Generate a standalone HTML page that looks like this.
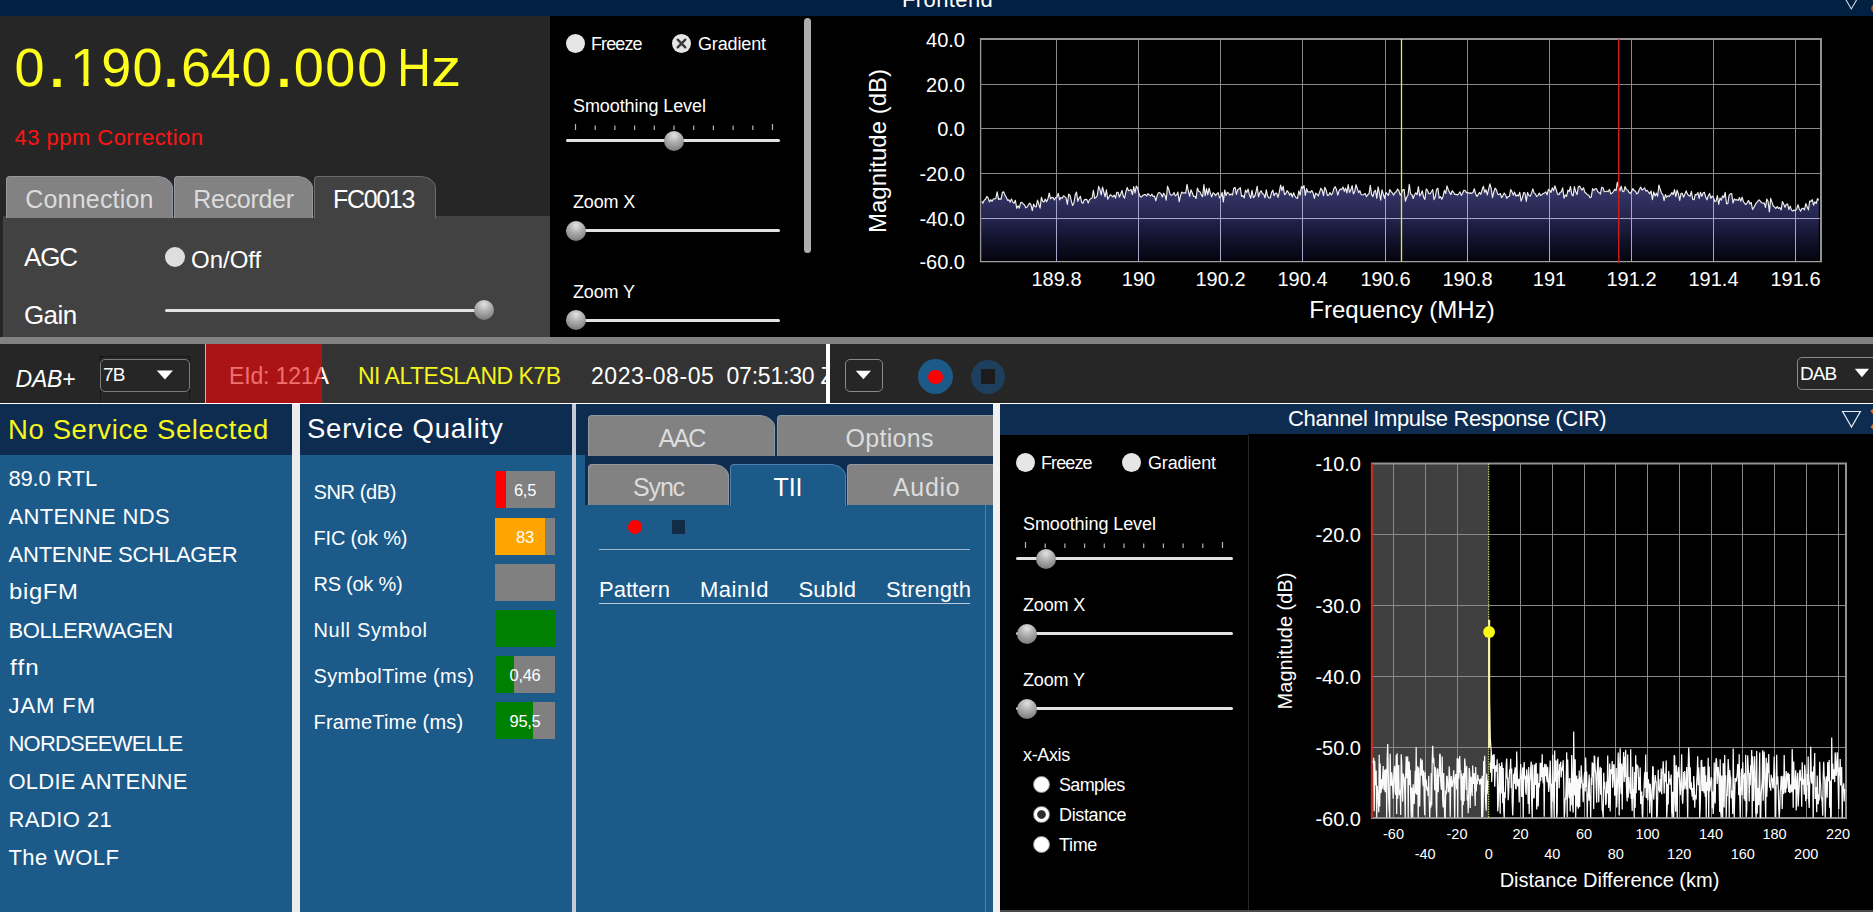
<!DOCTYPE html>
<html><head><meta charset="utf-8"><title>DAB</title>
<style>
html,body{margin:0;padding:0;background:#000;}
body{width:1873px;height:912px;overflow:hidden;position:relative;font-family:"Liberation Sans",sans-serif;color:#fff;}
.a{position:absolute;white-space:nowrap;}
.t{position:absolute;white-space:nowrap;line-height:1;}
.fd{position:absolute;top:37.3px;width:40px;text-align:center;font-size:54px;line-height:60px;color:#ffff1e;}
.tab{position:absolute;box-sizing:border-box;background:#828282;border:1px solid #93999f;border-bottom:none;border-radius:4px 16px 0 0 / 4px 12.5px 0 0;text-align:center;color:#dcdcdc;}
.trk{position:absolute;height:3px;background:#e2e2e2;border-radius:2px;}
.thumb{position:absolute;width:20px;height:20px;border-radius:50%;background:radial-gradient(circle at 50% 22%,#e2e2e2 0%,#b0b0b0 38%,#6a6a6a 100%);}
.rad{position:absolute;width:19px;height:19px;border-radius:50%;background:#e6e6e6;}
.lb{position:absolute;white-space:nowrap;font-size:18px;line-height:20px;color:#fff;}
.li{position:absolute;left:8.5px;white-space:nowrap;font-size:22px;line-height:26px;color:#fff;letter-spacing:-0.3px;}
.ql{position:absolute;left:313.5px;white-space:nowrap;font-size:20px;line-height:24px;color:#fff;}
.bar{position:absolute;left:495px;width:60px;height:37px;background:#808080;overflow:hidden;}
.bar i{position:absolute;left:0;top:0;bottom:0;display:block;}
.bar span{position:absolute;left:0;right:0;top:0;line-height:39px;text-align:center;font-size:16.5px;color:#fff;letter-spacing:-0.3px;}
.rb{position:absolute;width:17px;height:17px;border-radius:50%;background:#fff;border:1px solid #8c8c8c;box-sizing:border-box;}
svg text{font-family:"Liberation Sans",sans-serif;fill:#fff;}
</style></head>
<body>
<!-- top title bar -->
<div class="a" style="left:0;top:0;width:1873px;height:16px;background:#022042;overflow:hidden;">
  <div class="t" style="left:902px;top:-10.6px;font-size:22px;letter-spacing:0.4px;">Frontend</div>
  <svg class="a" style="left:1838px;top:0" width="35" height="16"><path d="M4.3,-6.5 L13.3,9 L22.3,-6.5" fill="none" stroke="#d0daea" stroke-width="1.1"/><circle cx="36.6" cy="8.5" r="3.4" fill="#a45a30"/></svg>
</div>

<!-- top-left panel -->
<div class="a" style="left:0;top:16px;width:550px;height:321px;background:#262626;"></div>
<div class="fd" style="left:9.5px;">0</div>
<div class="fd" style="left:37px;transform:scale(1.4);transform-origin:50% 78.3%;">.</div>
<div class="fd" style="left:65px;clip-path:polygon(0 0,40px 0,40px 42.6px,23.6px 42.6px,23.6px 60px,18.4px 60px,18.4px 42.6px,0 42.6px);">1</div>
<div class="fd" style="left:96.2px;">9</div>
<div class="fd" style="left:127.5px;">0</div>
<div class="fd" style="left:151px;transform:scale(1.4);transform-origin:50% 78.3%;">.</div>
<div class="fd" style="left:176px;">6</div>
<div class="fd" style="left:205.6px;">4</div>
<div class="fd" style="left:236.6px;">0</div>
<div class="fd" style="left:263.5px;transform:scale(1.4);transform-origin:50% 78.3%;">.</div>
<div class="fd" style="left:288.7px;">0</div>
<div class="fd" style="left:320.2px;">0</div>
<div class="fd" style="left:352.2px;">0</div>
<div class="fd" style="left:393.7px;transform:scaleX(0.86);">H</div>
<div class="fd" style="left:425.8px;transform:scaleX(1.12);">z</div>

<div class="t" style="left:14.5px;top:126px;font-size:22px;line-height:24px;color:#ff1414;letter-spacing:0.47px;">43 ppm Correction</div>

<!-- tab strip -->
<div class="a" style="left:3px;top:216px;width:547px;height:121px;background:#424242;"></div>
<div class="tab" style="left:6px;top:176px;width:167px;height:42px;font-size:25px;line-height:44px;letter-spacing:0.2px;">Connection</div>
<div class="tab" style="left:174px;top:176px;width:139px;height:42px;font-size:25px;line-height:44px;letter-spacing:-0.3px;">Recorder</div>
<div class="tab" style="left:314px;top:176px;width:122px;height:42px;font-size:25px;line-height:44px;background:#424242;color:#fff;border-color:#6c6c6c;letter-spacing:-1.3px;text-indent:-3px;">FC0013</div>
<div class="t" style="left:24px;top:243px;font-size:26px;line-height:28px;letter-spacing:-1.2px;">AGC</div>
<div class="rad" style="left:165px;top:247px;width:20px;height:20px;background:#dedede;"></div>
<div class="t" style="left:191px;top:246px;font-size:24px;line-height:28px;">On/Off</div>
<div class="t" style="left:24px;top:301px;font-size:26px;line-height:28px;letter-spacing:-0.6px;">Gain</div>
<div class="trk" style="left:165px;top:309px;width:320px;"></div>
<div class="thumb" style="left:474px;top:300px;"></div>

<!-- splitter -->
<div class="a" style="left:0;top:337px;width:1873px;height:7px;background:#828282;"></div>

<!-- spectrum controls -->
<div class="a" style="left:804px;top:17.5px;width:7px;height:235.5px;background:#aeacac;border-radius:4px;"></div>
<div class="rad" style="left:566px;top:33.5px;"></div>
<div class="lb" style="left:591px;top:34.1px;letter-spacing:-0.9px;">Freeze</div>
<div class="rad" style="left:672px;top:33.5px;"></div>
<svg class="a" style="left:672px;top:33.5px" width="19" height="19"><path d="M5.7,5.7 L13.3,13.3 M13.3,5.7 L5.7,13.3" stroke="#3a3a3a" stroke-width="2.4" stroke-linecap="round"/></svg>
<div class="lb" style="left:698px;top:34.1px;letter-spacing:-0.15px;">Gradient</div>
<div class="lb" style="left:573px;top:96.1px;letter-spacing:-0.08px;">Smoothing Level</div>
<svg class="a" style="left:560px;top:120px" width="230" height="14"><g stroke="#b4b4b4" stroke-width="1.2">
<line x1="15.5" y1="4" x2="15.5" y2="10"/><line x1="35.2" y1="5.6" x2="35.2" y2="10"/><line x1="54.9" y1="5.6" x2="54.9" y2="10"/><line x1="74.6" y1="5.6" x2="74.6" y2="10"/><line x1="94.3" y1="5.6" x2="94.3" y2="10"/><line x1="114" y1="5.6" x2="114" y2="10"/><line x1="133.7" y1="5.6" x2="133.7" y2="10"/><line x1="153.4" y1="5.6" x2="153.4" y2="10"/><line x1="173.1" y1="5.6" x2="173.1" y2="10"/><line x1="192.8" y1="5.6" x2="192.8" y2="10"/><line x1="212.5" y1="4" x2="212.5" y2="10"/></g></svg>
<div class="trk" style="left:566px;top:139px;width:214px;"></div>
<div class="thumb" style="left:664px;top:130.5px;"></div>
<div class="lb" style="left:573px;top:192.1px;letter-spacing:-0.15px;">Zoom X</div>
<div class="trk" style="left:566px;top:229px;width:214px;"></div>
<div class="thumb" style="left:566px;top:220.5px;"></div>
<div class="lb" style="left:573px;top:282.1px;letter-spacing:-0.15px;">Zoom Y</div>
<div class="trk" style="left:566px;top:319px;width:214px;"></div>
<div class="thumb" style="left:566px;top:310px;"></div>

<!-- middle row -->
<div class="a" style="left:0;top:344px;width:1873px;height:59px;background:#262626;"></div>
<div class="a" style="left:322px;top:344px;width:504px;height:59px;background:#333333;"></div>
<div class="t" style="left:15.6px;top:366px;font-size:23px;line-height:26px;font-style:italic;letter-spacing:-0.3px;">DAB+</div>
<div class="a" style="left:100px;top:356px;width:90px;height:48px;box-sizing:border-box;border:1px dotted #0a0a0a;border-bottom:none;"></div>
<div class="a" style="left:100px;top:359px;width:90px;height:33px;box-sizing:border-box;border:1px solid #7c7c7c;border-radius:5px;"></div>
<div class="t" style="left:103px;top:365px;font-size:19px;line-height:20px;letter-spacing:-0.8px;">7B</div>
<svg class="a" style="left:156px;top:370px" width="18" height="10"><path d="M0.8,0.6 L17,0.6 L8.9,9.4 Z" fill="#fff"/></svg>
<div class="a" style="left:205px;top:344px;width:117px;height:59px;background:#aa1414;border-left:1px solid #d8b0b0;box-sizing:border-box;"></div>
<div class="t" style="left:229px;top:363px;font-size:23px;line-height:26px;color:#f07070;letter-spacing:-0.15px;">EId: 121A</div>
<div class="a" style="left:322px;top:344px;width:20px;height:59px;overflow:hidden;"><div class="t" style="left:-93px;top:19px;font-size:23px;line-height:26px;color:#fff;letter-spacing:-0.15px;">EId: 121A</div></div>
<div class="t" style="left:358px;top:363px;font-size:23px;line-height:26px;color:#f4f420;letter-spacing:-0.5px;">NI ALTESLAND K7B</div>
<div class="a" style="left:560px;top:344px;width:266px;height:59px;overflow:hidden;"><div class="t" style="left:31px;top:19px;font-size:23px;line-height:26px;color:#fff;letter-spacing:0.57px;">2023-08-05</div><div class="t" style="left:166.5px;top:19px;font-size:23px;line-height:26px;color:#fff;letter-spacing:-0.2px;white-space:pre;">07:51:30 Z</div></div>
<div class="a" style="left:826px;top:344px;width:4px;height:59px;background:#fff;"></div>
<div class="a" style="left:845px;top:359px;width:38px;height:33px;box-sizing:border-box;border:1px solid #8a8a8a;border-radius:5px;"></div>
<svg class="a" style="left:855px;top:370px" width="18" height="10"><path d="M0.8,0.8 L16,0.8 L8.4,9.2 Z" fill="#fff"/></svg>
<div class="a" style="left:918px;top:359px;width:35px;height:35px;border-radius:50%;background:#1c5a8a;"></div>
<div class="a" style="left:928px;top:369.5px;width:14.5px;height:14.5px;border-radius:50%;background:#ff0000;"></div>
<div class="a" style="left:971px;top:360px;width:34px;height:34px;border-radius:50%;background:#1e3f5e;"></div>
<div class="a" style="left:981px;top:369px;width:14px;height:15px;background:#1c1c1c;"></div>
<div class="a" style="left:1797px;top:357px;width:90px;height:33px;box-sizing:border-box;border:1px solid #8a8a8a;border-radius:5px;"></div>
<div class="t" style="left:1800px;top:364px;font-size:19px;line-height:20px;letter-spacing:-1px;">DAB</div>
<svg class="a" style="left:1854px;top:368px" width="16" height="10"><path d="M0.8,0.8 L15,0.8 L7.9,9.2 Z" fill="#fff"/></svg>
<div class="a" style="left:0;top:402.5px;width:1873px;height:1.5px;background:#fff;"></div>

<!-- bottom: service list -->
<div class="a" style="left:0;top:404px;width:292px;height:508px;background:#1c5a8a;"></div>
<div class="a" style="left:0;top:404px;width:292px;height:51px;background:#0e2c50;"></div>
<div class="t" style="left:8px;top:413.5px;font-size:27.5px;line-height:32px;color:#f6f620;letter-spacing:0.62px;">No Service Selected</div>
<div class="li" style="top:465.5px;letter-spacing:-0.21px;">89.0 RTL</div>
<div class="li" style="top:503.5px;letter-spacing:0.34px;">ANTENNE NDS</div>
<div class="li" style="top:541.5px;letter-spacing:-0.21px;">ANTENNE SCHLAGER</div>
<div class="li" style="top:579.4px;letter-spacing:0.6px;transform:scaleX(1.085);transform-origin:0 0;">bigFM</div>
<div class="li" style="top:617.6px;letter-spacing:-0.42px;">BOLLERWAGEN</div>
<div class="li" style="top:654.75px;letter-spacing:1px;transform:scaleX(1.1);transform-origin:0 0;left:9.5px;">ffn</div>
<div class="li" style="top:692.75px;letter-spacing:0.94px;">JAM FM</div>
<div class="li" style="top:731px;letter-spacing:-0.80px;">NORDSEEWELLE</div>
<div class="li" style="top:769px;letter-spacing:0.23px;">OLDIE ANTENNE</div>
<div class="li" style="top:807px;letter-spacing:0.44px;">RADIO 21</div>
<div class="li" style="top:844.75px;letter-spacing:0.40px;">The WOLF</div>
<div class="a" style="left:292px;top:404px;width:8px;height:508px;background:#ececec;"></div>

<!-- service quality -->
<div class="a" style="left:300px;top:404px;width:272px;height:508px;background:#1c5a8a;"></div>
<div class="a" style="left:300px;top:404px;width:272px;height:51px;background:#0e2c50;"></div>
<div class="t" style="left:307px;top:413px;font-size:27.5px;line-height:32px;color:#fff;letter-spacing:0.77px;">Service Quality</div>
<div class="ql" style="top:479.8px;letter-spacing:-0.39px;">SNR (dB)</div>
<div class="ql" style="top:525.8px;letter-spacing:-0.17px;">FIC (ok %)</div>
<div class="ql" style="top:571.8px;letter-spacing:-0.25px;">RS (ok %)</div>
<div class="ql" style="top:617.8px;letter-spacing:0.68px;">Null Symbol</div>
<div class="ql" style="top:663.8px;letter-spacing:0.32px;">SymbolTime (ms)</div>
<div class="ql" style="top:709.8px;letter-spacing:0.20px;">FrameTime (ms)</div>
<div class="bar" style="top:471px;"><i style="width:11px;background:#ff0000"></i><span>6,5</span></div>
<div class="bar" style="top:518px;"><i style="width:50px;background:#ffa500"></i><span>83</span></div>
<div class="bar" style="top:564px;"></div>
<div class="bar" style="top:610px;"><i style="width:60px;background:#008000"></i></div>
<div class="bar" style="top:656px;"><i style="width:19px;background:#008000"></i><span>0,46</span></div>
<div class="bar" style="top:702px;"><i style="width:38px;background:#008000"></i><span>95,5</span></div>
<div class="a" style="left:572px;top:404px;width:4.5px;height:508px;background:#c4cbd6;"></div>

<!-- tab panel -->
<div class="a" style="left:576px;top:404px;width:417px;height:508px;background:#1c5a8a;overflow:hidden;">
  <div class="a" style="left:0;top:0;width:417px;height:51px;background:#0e2c50;"></div>
  <div class="a" style="left:9px;top:0;width:408px;height:101px;background:#0e2c50;"></div>
  <div class="tab" style="left:12px;top:11px;width:187px;height:41px;font-size:25px;line-height:44px;letter-spacing:-1.8px;">AAC</div>
  <div class="tab" style="left:201px;top:11px;width:230px;height:41px;font-size:25px;line-height:44px;text-align:left;padding-left:67.5px;letter-spacing:0.3px;">Options</div>
  <div class="tab" style="left:12px;top:60px;width:141px;height:41px;font-size:25px;line-height:44px;letter-spacing:-1.2px;">Sync</div>
  <div class="tab" style="left:154px;top:60px;width:116px;height:42px;font-size:25px;line-height:44px;background:#1c5a8a;color:#fff;border-color:#4f82ab;">TII</div>
  <div class="tab" style="left:271px;top:60px;width:160px;height:41px;font-size:25px;line-height:44px;text-align:left;padding-left:45px;letter-spacing:0.7px;">Audio</div>
  <div class="a" style="left:409px;top:101px;width:1px;height:420px;background:#4f82ab;"></div>
  <div class="a" style="left:52.4px;top:116.2px;width:13.5px;height:13.5px;border-radius:50%;background:#ff0000;"></div>
  <div class="a" style="left:96px;top:116px;width:13px;height:14px;background:#122c48;"></div>
  <div class="a" style="left:23px;top:145px;width:371px;height:1px;background:#9db6cc;"></div>
  <div class="t" style="left:23px;top:173px;font-size:22px;line-height:26px;letter-spacing:0px;">Pattern</div>
  <div class="t" style="left:124px;top:173px;font-size:22px;line-height:26px;letter-spacing:0.5px;">MainId</div>
  <div class="t" style="left:222.5px;top:173px;font-size:22px;line-height:26px;letter-spacing:0px;">SubId</div>
  <div class="t" style="left:310px;top:173px;font-size:22px;line-height:26px;letter-spacing:0.25px;">Strength</div>
  <div class="a" style="left:23px;top:199px;width:371px;height:1px;background:#b8c8d8;"></div>
</div>
<div class="a" style="left:993px;top:404px;width:7px;height:508px;background:#f0f0f0;"></div>

<!-- CIR panel -->
<div class="a" style="left:1000px;top:404px;width:873px;height:30px;background:#0e2c50;overflow:hidden;">
  <div class="t" style="left:288px;top:3px;font-size:22px;line-height:24px;letter-spacing:-0.36px;">Channel Impulse Response (CIR)</div>
  <svg class="a" style="left:838px;top:0" width="35" height="30"><path d="M4.6,7.5 L22.4,7.5 L13.5,23 Z" fill="none" stroke="#e8eef8" stroke-width="1.2"/><path d="M33.5,6 L41.5,15 L33.5,24" stroke="#e06a1a" stroke-width="3" fill="none"/></svg>
</div>
<div class="a" style="left:1000px;top:434px;width:248px;height:1px;background:#0e2c50;"></div><div class="a" style="left:1000px;top:435px;width:248px;height:477px;background:#000;border-right:1px solid #262626;"></div>
<div class="a" style="left:1000px;top:910px;width:873px;height:2px;background:#4a4a4a;"></div>
<div class="rad" style="left:1016px;top:452.5px;"></div>
<div class="lb" style="left:1041px;top:453.1px;letter-spacing:-0.9px;">Freeze</div>
<div class="rad" style="left:1122px;top:452.5px;"></div>
<div class="lb" style="left:1148px;top:453.1px;letter-spacing:-0.15px;">Gradient</div>
<div class="lb" style="left:1023px;top:514.1px;letter-spacing:-0.08px;">Smoothing Level</div>
<svg class="a" style="left:1010px;top:538px" width="230" height="14"><g stroke="#b4b4b4" stroke-width="1.2">
<line x1="15.5" y1="4" x2="15.5" y2="10"/><line x1="35.2" y1="5.6" x2="35.2" y2="10"/><line x1="54.9" y1="5.6" x2="54.9" y2="10"/><line x1="74.6" y1="5.6" x2="74.6" y2="10"/><line x1="94.3" y1="5.6" x2="94.3" y2="10"/><line x1="114" y1="5.6" x2="114" y2="10"/><line x1="133.7" y1="5.6" x2="133.7" y2="10"/><line x1="153.4" y1="5.6" x2="153.4" y2="10"/><line x1="173.1" y1="5.6" x2="173.1" y2="10"/><line x1="192.8" y1="5.6" x2="192.8" y2="10"/><line x1="212.5" y1="4" x2="212.5" y2="10"/></g></svg>
<div class="trk" style="left:1016px;top:557px;width:217px;"></div>
<div class="thumb" style="left:1035.6px;top:548.5px;"></div>
<div class="lb" style="left:1023px;top:595.1px;letter-spacing:-0.15px;">Zoom X</div>
<div class="trk" style="left:1016px;top:632px;width:217px;"></div>
<div class="thumb" style="left:1016.6px;top:623.5px;"></div>
<div class="lb" style="left:1023px;top:670.1px;letter-spacing:-0.15px;">Zoom Y</div>
<div class="trk" style="left:1016px;top:707px;width:217px;"></div>
<div class="thumb" style="left:1016.6px;top:698.5px;"></div>
<div class="lb" style="left:1023px;top:745.1px;letter-spacing:-0.35px;">x-Axis</div>
<div class="rb" style="left:1032.7px;top:776px;"></div>
<div class="lb" style="left:1059px;top:775.1px;letter-spacing:-0.65px;">Samples</div>
<div class="rb" style="left:1032.7px;top:805.7px;background:radial-gradient(circle,#2c2c2c 0 3.8px,#fff 4.8px);"></div>
<div class="lb" style="left:1059px;top:805.1px;letter-spacing:-0.35px;">Distance</div>
<div class="rb" style="left:1032.7px;top:835.8px;"></div>
<div class="lb" style="left:1059px;top:835.1px;letter-spacing:-0.35px;">Time</div>

<svg class="a" style="left:0;top:0;pointer-events:none" width="1873" height="345" viewBox="0 0 1873 345">
<defs><linearGradient id="g1" gradientUnits="userSpaceOnUse" x1="0" y1="182" x2="0" y2="262"><stop offset="0" stop-color="#3c3c70"/><stop offset="0.45" stop-color="#24244e"/><stop offset="0.72" stop-color="#12122d"/><stop offset="1" stop-color="#04040c"/></linearGradient></defs>
<polygon points="981.6,261.5 981.6,201.4 982.9,203.2 984.2,200.3 985.5,199.2 986.8,196.4 988.1,197.9 989.4,201.9 990.7,199.7 992.0,201.4 993.3,198.9 994.6,199.0 995.9,198.2 997.2,191.9 998.5,199.4 999.8,198.9 1001.1,199.2 1002.4,192.4 1003.7,191.9 1005.0,195.1 1006.3,197.2 1007.6,200.4 1008.9,199.9 1010.2,202.1 1011.5,198.9 1012.8,202.1 1014.1,203.2 1015.4,200.3 1016.7,208.3 1018.0,205.8 1019.3,208.1 1020.6,202.8 1021.9,202.4 1023.2,203.8 1024.5,205.0 1025.8,207.8 1027.1,207.0 1028.4,204.9 1029.7,203.2 1031.0,204.8 1032.3,210.7 1033.6,204.1 1034.9,206.5 1036.2,206.9 1037.5,200.1 1038.8,204.1 1040.1,208.2 1041.4,197.2 1042.7,201.2 1044.0,201.9 1045.3,199.0 1046.6,201.8 1047.9,199.0 1049.2,193.0 1050.5,198.7 1051.8,197.6 1053.1,197.4 1054.4,200.0 1055.7,197.5 1057.0,197.2 1058.3,193.3 1059.6,200.0 1060.9,197.4 1062.2,198.3 1063.5,195.8 1064.8,196.5 1066.1,198.1 1067.4,204.4 1068.7,194.1 1070.0,195.1 1071.3,200.8 1072.6,205.5 1073.9,203.1 1075.2,194.8 1076.5,192.0 1077.8,201.3 1079.1,198.2 1080.4,196.3 1081.7,202.6 1083.0,203.3 1084.3,199.8 1085.6,199.4 1086.9,199.6 1088.2,203.0 1089.5,199.8 1090.8,198.6 1092.1,198.0 1093.4,190.3 1094.7,198.4 1096.0,197.5 1097.3,195.5 1098.6,186.4 1099.9,189.3 1101.2,194.9 1102.5,187.0 1103.8,192.0 1105.1,196.8 1106.4,189.9 1107.7,199.2 1109.0,197.0 1110.3,194.7 1111.6,195.8 1112.9,196.9 1114.2,195.1 1115.5,198.1 1116.8,192.3 1118.1,192.4 1119.4,197.0 1120.7,194.0 1122.0,190.5 1123.3,196.1 1124.6,198.2 1125.9,191.7 1127.2,187.5 1128.5,190.7 1129.8,190.5 1131.1,189.5 1132.4,194.6 1133.7,186.6 1135.0,192.9 1136.3,186.1 1137.6,187.9 1138.9,193.6 1140.2,196.6 1141.5,196.9 1142.8,195.5 1144.1,194.6 1145.4,194.6 1146.7,196.0 1148.0,193.6 1149.3,194.9 1150.6,196.0 1151.9,194.2 1153.2,196.5 1154.5,196.1 1155.8,200.8 1157.1,195.8 1158.4,192.8 1159.7,192.6 1161.0,193.8 1162.3,197.0 1163.6,193.2 1164.9,195.2 1166.2,200.2 1167.5,186.2 1168.8,189.5 1170.1,194.4 1171.4,195.3 1172.7,194.8 1174.0,192.5 1175.3,195.9 1176.6,194.9 1177.9,192.1 1179.2,201.6 1180.5,195.6 1181.8,192.0 1183.1,193.1 1184.4,192.7 1185.7,193.2 1187.0,184.4 1188.3,190.9 1189.6,196.4 1190.9,189.8 1192.2,192.7 1193.5,196.3 1194.8,196.3 1196.1,198.4 1197.4,188.0 1198.7,191.4 1200.0,191.7 1201.3,194.9 1202.6,196.8 1203.9,184.5 1205.2,195.7 1206.5,188.5 1207.8,194.8 1209.1,188.2 1210.4,193.1 1211.7,196.9 1213.0,192.8 1214.3,193.5 1215.6,195.6 1216.9,193.7 1218.2,192.7 1219.5,197.9 1220.8,196.9 1222.1,192.3 1223.4,201.9 1224.7,190.0 1226.0,195.6 1227.3,192.3 1228.6,193.2 1229.9,195.2 1231.2,193.8 1232.5,195.0 1233.8,188.0 1235.1,187.4 1236.4,194.3 1237.7,189.8 1239.0,189.1 1240.3,187.6 1241.6,196.4 1242.9,195.6 1244.2,197.9 1245.5,190.2 1246.8,192.5 1248.1,189.0 1249.4,194.9 1250.7,198.2 1252.0,190.3 1253.3,197.6 1254.6,196.5 1255.9,192.5 1257.2,186.2 1258.5,196.7 1259.8,192.8 1261.1,190.7 1262.4,193.8 1263.7,194.1 1265.0,197.8 1266.3,189.8 1267.6,196.1 1268.9,197.9 1270.2,198.0 1271.5,192.6 1272.8,190.2 1274.1,195.7 1275.4,193.3 1276.7,193.1 1278.0,197.4 1279.3,192.2 1280.6,185.0 1281.9,190.6 1283.2,186.3 1284.5,194.6 1285.8,193.8 1287.1,190.7 1288.4,192.3 1289.7,195.3 1291.0,193.1 1292.3,197.0 1293.6,192.8 1294.9,196.0 1296.2,197.8 1297.5,198.4 1298.8,190.9 1300.1,195.2 1301.4,186.6 1302.7,188.3 1304.0,185.6 1305.3,195.3 1306.6,188.7 1307.9,192.0 1309.2,191.8 1310.5,192.3 1311.8,190.5 1313.1,193.0 1314.4,198.4 1315.7,193.1 1317.0,194.2 1318.3,195.9 1319.6,192.1 1320.9,188.2 1322.2,190.1 1323.5,195.7 1324.8,187.3 1326.1,189.9 1327.4,195.4 1328.7,195.3 1330.0,192.6 1331.3,195.0 1332.6,193.1 1333.9,188.5 1335.2,186.7 1336.5,189.6 1337.8,195.1 1339.1,190.7 1340.4,189.1 1341.7,189.4 1343.0,186.9 1344.3,191.3 1345.6,188.2 1346.9,193.0 1348.2,184.5 1349.5,192.5 1350.8,190.1 1352.1,185.6 1353.4,193.9 1354.7,191.4 1356.0,184.7 1357.3,188.5 1358.6,192.7 1359.9,190.7 1361.2,194.6 1362.5,194.8 1363.8,194.6 1365.1,193.4 1366.4,196.6 1367.7,194.7 1369.0,193.8 1370.3,185.4 1371.6,194.4 1372.9,196.6 1374.2,191.5 1375.5,190.4 1376.8,198.3 1378.1,186.9 1379.4,193.1 1380.7,200.1 1382.0,189.8 1383.3,194.1 1384.6,198.4 1385.9,192.3 1387.2,194.0 1388.5,195.3 1389.8,189.5 1391.1,191.6 1392.4,193.1 1393.7,195.1 1395.0,192.5 1396.3,191.7 1397.6,189.0 1398.9,190.9 1400.2,195.2 1401.5,193.1 1402.8,189.8 1404.1,189.5 1405.4,201.1 1406.7,197.2 1408.0,195.2 1409.3,184.4 1410.6,194.0 1411.9,194.5 1413.2,198.5 1414.5,194.8 1415.8,192.9 1417.1,194.6 1418.4,186.7 1419.7,195.8 1421.0,194.3 1422.3,190.8 1423.6,197.1 1424.9,199.4 1426.2,189.0 1427.5,190.4 1428.8,193.7 1430.1,193.6 1431.4,191.7 1432.7,189.6 1434.0,199.6 1435.3,197.0 1436.6,189.4 1437.9,188.2 1439.2,198.1 1440.5,196.7 1441.8,199.3 1443.1,196.2 1444.4,190.4 1445.7,193.5 1447.0,185.9 1448.3,189.7 1449.6,192.4 1450.9,194.6 1452.2,190.7 1453.5,192.3 1454.8,194.4 1456.1,194.3 1457.4,195.1 1458.7,193.8 1460.0,191.9 1461.3,195.4 1462.6,193.3 1463.9,190.2 1465.2,190.5 1466.5,192.6 1467.8,192.5 1469.1,193.3 1470.4,192.9 1471.7,193.4 1473.0,192.5 1474.3,188.7 1475.6,193.8 1476.9,196.4 1478.2,194.6 1479.5,192.4 1480.8,194.3 1482.1,189.8 1483.4,186.3 1484.7,192.4 1486.0,189.7 1487.3,194.9 1488.6,189.4 1489.9,183.8 1491.2,188.5 1492.5,197.6 1493.8,192.0 1495.1,188.2 1496.4,189.8 1497.7,194.2 1499.0,194.6 1500.3,193.5 1501.6,197.7 1502.9,195.6 1504.2,193.0 1505.5,194.8 1506.8,198.4 1508.1,196.5 1509.4,196.5 1510.7,189.6 1512.0,191.9 1513.3,195.1 1514.6,192.0 1515.9,196.2 1517.2,195.0 1518.5,196.0 1519.8,192.3 1521.1,201.1 1522.4,197.6 1523.7,192.5 1525.0,193.0 1526.3,201.3 1527.6,192.4 1528.9,195.6 1530.2,196.2 1531.5,193.1 1532.8,188.9 1534.1,192.9 1535.4,193.9 1536.7,196.5 1538.0,195.6 1539.3,193.0 1540.6,195.5 1541.9,194.7 1543.2,193.5 1544.5,192.9 1545.8,191.9 1547.1,194.8 1548.4,189.4 1549.7,190.2 1551.0,192.4 1552.3,187.8 1553.6,190.7 1554.9,185.8 1556.2,189.7 1557.5,194.2 1558.8,194.6 1560.1,192.6 1561.4,191.8 1562.7,187.9 1564.0,198.2 1565.3,194.9 1566.6,196.4 1567.9,190.1 1569.2,191.7 1570.5,186.5 1571.8,194.5 1573.1,195.9 1574.4,186.6 1575.7,191.8 1577.0,194.6 1578.3,186.9 1579.6,186.0 1580.9,188.4 1582.2,190.1 1583.5,187.7 1584.8,192.2 1586.1,193.3 1587.4,194.7 1588.7,195.1 1590.0,197.7 1591.3,196.9 1592.6,188.6 1593.9,190.5 1595.2,188.8 1596.5,188.6 1597.8,191.8 1599.1,192.5 1600.4,194.1 1601.7,187.3 1603.0,187.7 1604.3,191.7 1605.6,191.5 1606.9,191.0 1608.2,191.7 1609.5,189.4 1610.8,193.9 1612.1,193.1 1613.4,191.5 1614.7,189.4 1616.0,190.7 1617.3,182.4 1618.6,187.2 1619.9,191.0 1621.2,186.2 1622.5,191.3 1623.8,191.6 1625.1,186.5 1626.4,189.8 1627.7,190.0 1629.0,192.6 1630.3,193.4 1631.6,191.4 1632.9,188.5 1634.2,190.6 1635.5,191.2 1636.8,193.9 1638.1,192.8 1639.4,189.4 1640.7,187.0 1642.0,190.0 1643.3,189.2 1644.6,187.9 1645.9,191.1 1647.2,190.3 1648.5,192.2 1649.8,193.8 1651.1,190.9 1652.4,199.7 1653.7,191.9 1655.0,195.9 1656.3,193.1 1657.6,196.2 1658.9,185.0 1660.2,189.3 1661.5,193.0 1662.8,194.6 1664.1,200.6 1665.4,194.6 1666.7,197.2 1668.0,195.8 1669.3,196.3 1670.6,194.9 1671.9,192.6 1673.2,194.6 1674.5,189.7 1675.8,196.7 1677.1,190.1 1678.4,193.7 1679.7,200.3 1681.0,193.3 1682.3,193.4 1683.6,197.2 1684.9,193.9 1686.2,190.9 1687.5,194.1 1688.8,195.6 1690.1,196.2 1691.4,191.4 1692.7,199.3 1694.0,199.8 1695.3,194.5 1696.6,194.8 1697.9,192.6 1699.2,198.5 1700.5,192.2 1701.8,196.3 1703.1,193.1 1704.4,192.3 1705.7,197.1 1707.0,199.8 1708.3,195.8 1709.6,193.4 1710.9,198.3 1712.2,196.1 1713.5,197.3 1714.8,201.6 1716.1,200.9 1717.4,195.6 1718.7,204.5 1720.0,198.1 1721.3,200.2 1722.6,195.9 1723.9,197.6 1725.2,192.4 1726.5,203.7 1727.8,203.7 1729.1,195.3 1730.4,193.8 1731.7,193.5 1733.0,203.0 1734.3,198.8 1735.6,200.0 1736.9,199.6 1738.2,200.5 1739.5,197.6 1740.8,201.3 1742.1,197.1 1743.4,201.5 1744.7,203.5 1746.0,204.5 1747.3,202.6 1748.6,200.4 1749.9,204.0 1751.2,202.5 1752.5,209.4 1753.8,207.7 1755.1,204.9 1756.4,202.8 1757.7,201.3 1759.0,199.8 1760.3,201.1 1761.6,202.8 1762.9,203.2 1764.2,202.9 1765.5,207.4 1766.8,199.0 1768.1,201.5 1769.4,211.9 1770.7,198.4 1772.0,202.4 1773.3,206.0 1774.6,207.2 1775.9,208.5 1777.2,206.5 1778.5,208.4 1779.8,207.6 1781.1,210.0 1782.4,201.5 1783.7,204.1 1785.0,207.3 1786.3,204.3 1787.6,204.0 1788.9,209.6 1790.2,206.1 1791.5,210.1 1792.8,211.1 1794.1,210.0 1795.4,210.7 1796.7,209.0 1798.0,204.7 1799.3,209.0 1800.6,211.2 1801.9,208.4 1803.2,208.3 1804.5,209.9 1805.8,203.5 1807.1,206.7 1808.4,209.9 1809.7,201.1 1811.0,201.4 1812.3,199.6 1813.6,205.2 1814.9,201.8 1816.2,203.5 1817.5,198.6 1818.8,200.4 1818.8,261.5" fill="url(#g1)" transform="translate(0,0)"/>
<line x1="1056.5" y1="39" x2="1056.5" y2="261.5" stroke="#888888" stroke-width="1"/>
<line x1="1138.5" y1="39" x2="1138.5" y2="261.5" stroke="#888888" stroke-width="1"/>
<line x1="1220.5" y1="39" x2="1220.5" y2="261.5" stroke="#888888" stroke-width="1"/>
<line x1="1302.5" y1="39" x2="1302.5" y2="261.5" stroke="#888888" stroke-width="1"/>
<line x1="1385.5" y1="39" x2="1385.5" y2="261.5" stroke="#888888" stroke-width="1"/>
<line x1="1467.5" y1="39" x2="1467.5" y2="261.5" stroke="#888888" stroke-width="1"/>
<line x1="1549.5" y1="39" x2="1549.5" y2="261.5" stroke="#888888" stroke-width="1"/>
<line x1="1631.5" y1="39" x2="1631.5" y2="261.5" stroke="#888888" stroke-width="1"/>
<line x1="1713.5" y1="39" x2="1713.5" y2="261.5" stroke="#888888" stroke-width="1"/>
<line x1="1795.5" y1="39" x2="1795.5" y2="261.5" stroke="#888888" stroke-width="1"/>
<line x1="980.6" y1="84.5" x2="1821" y2="84.5" stroke="#888888" stroke-width="1"/>
<line x1="980.6" y1="128.5" x2="1821" y2="128.5" stroke="#888888" stroke-width="1"/>
<line x1="980.6" y1="173.5" x2="1821" y2="173.5" stroke="#888888" stroke-width="1"/>
<line x1="980.6" y1="218.5" x2="1821" y2="218.5" stroke="#888888" stroke-width="1"/>
<clipPath id="cp1"><polygon points="981.6,261.5 981.6,201.4 982.9,203.2 984.2,200.3 985.5,199.2 986.8,196.4 988.1,197.9 989.4,201.9 990.7,199.7 992.0,201.4 993.3,198.9 994.6,199.0 995.9,198.2 997.2,191.9 998.5,199.4 999.8,198.9 1001.1,199.2 1002.4,192.4 1003.7,191.9 1005.0,195.1 1006.3,197.2 1007.6,200.4 1008.9,199.9 1010.2,202.1 1011.5,198.9 1012.8,202.1 1014.1,203.2 1015.4,200.3 1016.7,208.3 1018.0,205.8 1019.3,208.1 1020.6,202.8 1021.9,202.4 1023.2,203.8 1024.5,205.0 1025.8,207.8 1027.1,207.0 1028.4,204.9 1029.7,203.2 1031.0,204.8 1032.3,210.7 1033.6,204.1 1034.9,206.5 1036.2,206.9 1037.5,200.1 1038.8,204.1 1040.1,208.2 1041.4,197.2 1042.7,201.2 1044.0,201.9 1045.3,199.0 1046.6,201.8 1047.9,199.0 1049.2,193.0 1050.5,198.7 1051.8,197.6 1053.1,197.4 1054.4,200.0 1055.7,197.5 1057.0,197.2 1058.3,193.3 1059.6,200.0 1060.9,197.4 1062.2,198.3 1063.5,195.8 1064.8,196.5 1066.1,198.1 1067.4,204.4 1068.7,194.1 1070.0,195.1 1071.3,200.8 1072.6,205.5 1073.9,203.1 1075.2,194.8 1076.5,192.0 1077.8,201.3 1079.1,198.2 1080.4,196.3 1081.7,202.6 1083.0,203.3 1084.3,199.8 1085.6,199.4 1086.9,199.6 1088.2,203.0 1089.5,199.8 1090.8,198.6 1092.1,198.0 1093.4,190.3 1094.7,198.4 1096.0,197.5 1097.3,195.5 1098.6,186.4 1099.9,189.3 1101.2,194.9 1102.5,187.0 1103.8,192.0 1105.1,196.8 1106.4,189.9 1107.7,199.2 1109.0,197.0 1110.3,194.7 1111.6,195.8 1112.9,196.9 1114.2,195.1 1115.5,198.1 1116.8,192.3 1118.1,192.4 1119.4,197.0 1120.7,194.0 1122.0,190.5 1123.3,196.1 1124.6,198.2 1125.9,191.7 1127.2,187.5 1128.5,190.7 1129.8,190.5 1131.1,189.5 1132.4,194.6 1133.7,186.6 1135.0,192.9 1136.3,186.1 1137.6,187.9 1138.9,193.6 1140.2,196.6 1141.5,196.9 1142.8,195.5 1144.1,194.6 1145.4,194.6 1146.7,196.0 1148.0,193.6 1149.3,194.9 1150.6,196.0 1151.9,194.2 1153.2,196.5 1154.5,196.1 1155.8,200.8 1157.1,195.8 1158.4,192.8 1159.7,192.6 1161.0,193.8 1162.3,197.0 1163.6,193.2 1164.9,195.2 1166.2,200.2 1167.5,186.2 1168.8,189.5 1170.1,194.4 1171.4,195.3 1172.7,194.8 1174.0,192.5 1175.3,195.9 1176.6,194.9 1177.9,192.1 1179.2,201.6 1180.5,195.6 1181.8,192.0 1183.1,193.1 1184.4,192.7 1185.7,193.2 1187.0,184.4 1188.3,190.9 1189.6,196.4 1190.9,189.8 1192.2,192.7 1193.5,196.3 1194.8,196.3 1196.1,198.4 1197.4,188.0 1198.7,191.4 1200.0,191.7 1201.3,194.9 1202.6,196.8 1203.9,184.5 1205.2,195.7 1206.5,188.5 1207.8,194.8 1209.1,188.2 1210.4,193.1 1211.7,196.9 1213.0,192.8 1214.3,193.5 1215.6,195.6 1216.9,193.7 1218.2,192.7 1219.5,197.9 1220.8,196.9 1222.1,192.3 1223.4,201.9 1224.7,190.0 1226.0,195.6 1227.3,192.3 1228.6,193.2 1229.9,195.2 1231.2,193.8 1232.5,195.0 1233.8,188.0 1235.1,187.4 1236.4,194.3 1237.7,189.8 1239.0,189.1 1240.3,187.6 1241.6,196.4 1242.9,195.6 1244.2,197.9 1245.5,190.2 1246.8,192.5 1248.1,189.0 1249.4,194.9 1250.7,198.2 1252.0,190.3 1253.3,197.6 1254.6,196.5 1255.9,192.5 1257.2,186.2 1258.5,196.7 1259.8,192.8 1261.1,190.7 1262.4,193.8 1263.7,194.1 1265.0,197.8 1266.3,189.8 1267.6,196.1 1268.9,197.9 1270.2,198.0 1271.5,192.6 1272.8,190.2 1274.1,195.7 1275.4,193.3 1276.7,193.1 1278.0,197.4 1279.3,192.2 1280.6,185.0 1281.9,190.6 1283.2,186.3 1284.5,194.6 1285.8,193.8 1287.1,190.7 1288.4,192.3 1289.7,195.3 1291.0,193.1 1292.3,197.0 1293.6,192.8 1294.9,196.0 1296.2,197.8 1297.5,198.4 1298.8,190.9 1300.1,195.2 1301.4,186.6 1302.7,188.3 1304.0,185.6 1305.3,195.3 1306.6,188.7 1307.9,192.0 1309.2,191.8 1310.5,192.3 1311.8,190.5 1313.1,193.0 1314.4,198.4 1315.7,193.1 1317.0,194.2 1318.3,195.9 1319.6,192.1 1320.9,188.2 1322.2,190.1 1323.5,195.7 1324.8,187.3 1326.1,189.9 1327.4,195.4 1328.7,195.3 1330.0,192.6 1331.3,195.0 1332.6,193.1 1333.9,188.5 1335.2,186.7 1336.5,189.6 1337.8,195.1 1339.1,190.7 1340.4,189.1 1341.7,189.4 1343.0,186.9 1344.3,191.3 1345.6,188.2 1346.9,193.0 1348.2,184.5 1349.5,192.5 1350.8,190.1 1352.1,185.6 1353.4,193.9 1354.7,191.4 1356.0,184.7 1357.3,188.5 1358.6,192.7 1359.9,190.7 1361.2,194.6 1362.5,194.8 1363.8,194.6 1365.1,193.4 1366.4,196.6 1367.7,194.7 1369.0,193.8 1370.3,185.4 1371.6,194.4 1372.9,196.6 1374.2,191.5 1375.5,190.4 1376.8,198.3 1378.1,186.9 1379.4,193.1 1380.7,200.1 1382.0,189.8 1383.3,194.1 1384.6,198.4 1385.9,192.3 1387.2,194.0 1388.5,195.3 1389.8,189.5 1391.1,191.6 1392.4,193.1 1393.7,195.1 1395.0,192.5 1396.3,191.7 1397.6,189.0 1398.9,190.9 1400.2,195.2 1401.5,193.1 1402.8,189.8 1404.1,189.5 1405.4,201.1 1406.7,197.2 1408.0,195.2 1409.3,184.4 1410.6,194.0 1411.9,194.5 1413.2,198.5 1414.5,194.8 1415.8,192.9 1417.1,194.6 1418.4,186.7 1419.7,195.8 1421.0,194.3 1422.3,190.8 1423.6,197.1 1424.9,199.4 1426.2,189.0 1427.5,190.4 1428.8,193.7 1430.1,193.6 1431.4,191.7 1432.7,189.6 1434.0,199.6 1435.3,197.0 1436.6,189.4 1437.9,188.2 1439.2,198.1 1440.5,196.7 1441.8,199.3 1443.1,196.2 1444.4,190.4 1445.7,193.5 1447.0,185.9 1448.3,189.7 1449.6,192.4 1450.9,194.6 1452.2,190.7 1453.5,192.3 1454.8,194.4 1456.1,194.3 1457.4,195.1 1458.7,193.8 1460.0,191.9 1461.3,195.4 1462.6,193.3 1463.9,190.2 1465.2,190.5 1466.5,192.6 1467.8,192.5 1469.1,193.3 1470.4,192.9 1471.7,193.4 1473.0,192.5 1474.3,188.7 1475.6,193.8 1476.9,196.4 1478.2,194.6 1479.5,192.4 1480.8,194.3 1482.1,189.8 1483.4,186.3 1484.7,192.4 1486.0,189.7 1487.3,194.9 1488.6,189.4 1489.9,183.8 1491.2,188.5 1492.5,197.6 1493.8,192.0 1495.1,188.2 1496.4,189.8 1497.7,194.2 1499.0,194.6 1500.3,193.5 1501.6,197.7 1502.9,195.6 1504.2,193.0 1505.5,194.8 1506.8,198.4 1508.1,196.5 1509.4,196.5 1510.7,189.6 1512.0,191.9 1513.3,195.1 1514.6,192.0 1515.9,196.2 1517.2,195.0 1518.5,196.0 1519.8,192.3 1521.1,201.1 1522.4,197.6 1523.7,192.5 1525.0,193.0 1526.3,201.3 1527.6,192.4 1528.9,195.6 1530.2,196.2 1531.5,193.1 1532.8,188.9 1534.1,192.9 1535.4,193.9 1536.7,196.5 1538.0,195.6 1539.3,193.0 1540.6,195.5 1541.9,194.7 1543.2,193.5 1544.5,192.9 1545.8,191.9 1547.1,194.8 1548.4,189.4 1549.7,190.2 1551.0,192.4 1552.3,187.8 1553.6,190.7 1554.9,185.8 1556.2,189.7 1557.5,194.2 1558.8,194.6 1560.1,192.6 1561.4,191.8 1562.7,187.9 1564.0,198.2 1565.3,194.9 1566.6,196.4 1567.9,190.1 1569.2,191.7 1570.5,186.5 1571.8,194.5 1573.1,195.9 1574.4,186.6 1575.7,191.8 1577.0,194.6 1578.3,186.9 1579.6,186.0 1580.9,188.4 1582.2,190.1 1583.5,187.7 1584.8,192.2 1586.1,193.3 1587.4,194.7 1588.7,195.1 1590.0,197.7 1591.3,196.9 1592.6,188.6 1593.9,190.5 1595.2,188.8 1596.5,188.6 1597.8,191.8 1599.1,192.5 1600.4,194.1 1601.7,187.3 1603.0,187.7 1604.3,191.7 1605.6,191.5 1606.9,191.0 1608.2,191.7 1609.5,189.4 1610.8,193.9 1612.1,193.1 1613.4,191.5 1614.7,189.4 1616.0,190.7 1617.3,182.4 1618.6,187.2 1619.9,191.0 1621.2,186.2 1622.5,191.3 1623.8,191.6 1625.1,186.5 1626.4,189.8 1627.7,190.0 1629.0,192.6 1630.3,193.4 1631.6,191.4 1632.9,188.5 1634.2,190.6 1635.5,191.2 1636.8,193.9 1638.1,192.8 1639.4,189.4 1640.7,187.0 1642.0,190.0 1643.3,189.2 1644.6,187.9 1645.9,191.1 1647.2,190.3 1648.5,192.2 1649.8,193.8 1651.1,190.9 1652.4,199.7 1653.7,191.9 1655.0,195.9 1656.3,193.1 1657.6,196.2 1658.9,185.0 1660.2,189.3 1661.5,193.0 1662.8,194.6 1664.1,200.6 1665.4,194.6 1666.7,197.2 1668.0,195.8 1669.3,196.3 1670.6,194.9 1671.9,192.6 1673.2,194.6 1674.5,189.7 1675.8,196.7 1677.1,190.1 1678.4,193.7 1679.7,200.3 1681.0,193.3 1682.3,193.4 1683.6,197.2 1684.9,193.9 1686.2,190.9 1687.5,194.1 1688.8,195.6 1690.1,196.2 1691.4,191.4 1692.7,199.3 1694.0,199.8 1695.3,194.5 1696.6,194.8 1697.9,192.6 1699.2,198.5 1700.5,192.2 1701.8,196.3 1703.1,193.1 1704.4,192.3 1705.7,197.1 1707.0,199.8 1708.3,195.8 1709.6,193.4 1710.9,198.3 1712.2,196.1 1713.5,197.3 1714.8,201.6 1716.1,200.9 1717.4,195.6 1718.7,204.5 1720.0,198.1 1721.3,200.2 1722.6,195.9 1723.9,197.6 1725.2,192.4 1726.5,203.7 1727.8,203.7 1729.1,195.3 1730.4,193.8 1731.7,193.5 1733.0,203.0 1734.3,198.8 1735.6,200.0 1736.9,199.6 1738.2,200.5 1739.5,197.6 1740.8,201.3 1742.1,197.1 1743.4,201.5 1744.7,203.5 1746.0,204.5 1747.3,202.6 1748.6,200.4 1749.9,204.0 1751.2,202.5 1752.5,209.4 1753.8,207.7 1755.1,204.9 1756.4,202.8 1757.7,201.3 1759.0,199.8 1760.3,201.1 1761.6,202.8 1762.9,203.2 1764.2,202.9 1765.5,207.4 1766.8,199.0 1768.1,201.5 1769.4,211.9 1770.7,198.4 1772.0,202.4 1773.3,206.0 1774.6,207.2 1775.9,208.5 1777.2,206.5 1778.5,208.4 1779.8,207.6 1781.1,210.0 1782.4,201.5 1783.7,204.1 1785.0,207.3 1786.3,204.3 1787.6,204.0 1788.9,209.6 1790.2,206.1 1791.5,210.1 1792.8,211.1 1794.1,210.0 1795.4,210.7 1796.7,209.0 1798.0,204.7 1799.3,209.0 1800.6,211.2 1801.9,208.4 1803.2,208.3 1804.5,209.9 1805.8,203.5 1807.1,206.7 1808.4,209.9 1809.7,201.1 1811.0,201.4 1812.3,199.6 1813.6,205.2 1814.9,201.8 1816.2,203.5 1817.5,198.6 1818.8,200.4 1818.8,261.5"/></clipPath><g clip-path="url(#cp1)" stroke="#a6a6c8" stroke-width="1"><line x1="1056.5" y1="39" x2="1056.5" y2="261.5"/><line x1="1138.5" y1="39" x2="1138.5" y2="261.5"/><line x1="1220.5" y1="39" x2="1220.5" y2="261.5"/><line x1="1302.5" y1="39" x2="1302.5" y2="261.5"/><line x1="1385.5" y1="39" x2="1385.5" y2="261.5"/><line x1="1467.5" y1="39" x2="1467.5" y2="261.5"/><line x1="1549.5" y1="39" x2="1549.5" y2="261.5"/><line x1="1631.5" y1="39" x2="1631.5" y2="261.5"/><line x1="1713.5" y1="39" x2="1713.5" y2="261.5"/><line x1="1795.5" y1="39" x2="1795.5" y2="261.5"/><line x1="980.6" y1="84.5" x2="1821" y2="84.5"/><line x1="980.6" y1="128.5" x2="1821" y2="128.5"/><line x1="980.6" y1="173.5" x2="1821" y2="173.5"/><line x1="980.6" y1="218.5" x2="1821" y2="218.5"/></g>
<polyline points="981.6,201.4 982.9,203.2 984.2,200.3 985.5,199.2 986.8,196.4 988.1,197.9 989.4,201.9 990.7,199.7 992.0,201.4 993.3,198.9 994.6,199.0 995.9,198.2 997.2,191.9 998.5,199.4 999.8,198.9 1001.1,199.2 1002.4,192.4 1003.7,191.9 1005.0,195.1 1006.3,197.2 1007.6,200.4 1008.9,199.9 1010.2,202.1 1011.5,198.9 1012.8,202.1 1014.1,203.2 1015.4,200.3 1016.7,208.3 1018.0,205.8 1019.3,208.1 1020.6,202.8 1021.9,202.4 1023.2,203.8 1024.5,205.0 1025.8,207.8 1027.1,207.0 1028.4,204.9 1029.7,203.2 1031.0,204.8 1032.3,210.7 1033.6,204.1 1034.9,206.5 1036.2,206.9 1037.5,200.1 1038.8,204.1 1040.1,208.2 1041.4,197.2 1042.7,201.2 1044.0,201.9 1045.3,199.0 1046.6,201.8 1047.9,199.0 1049.2,193.0 1050.5,198.7 1051.8,197.6 1053.1,197.4 1054.4,200.0 1055.7,197.5 1057.0,197.2 1058.3,193.3 1059.6,200.0 1060.9,197.4 1062.2,198.3 1063.5,195.8 1064.8,196.5 1066.1,198.1 1067.4,204.4 1068.7,194.1 1070.0,195.1 1071.3,200.8 1072.6,205.5 1073.9,203.1 1075.2,194.8 1076.5,192.0 1077.8,201.3 1079.1,198.2 1080.4,196.3 1081.7,202.6 1083.0,203.3 1084.3,199.8 1085.6,199.4 1086.9,199.6 1088.2,203.0 1089.5,199.8 1090.8,198.6 1092.1,198.0 1093.4,190.3 1094.7,198.4 1096.0,197.5 1097.3,195.5 1098.6,186.4 1099.9,189.3 1101.2,194.9 1102.5,187.0 1103.8,192.0 1105.1,196.8 1106.4,189.9 1107.7,199.2 1109.0,197.0 1110.3,194.7 1111.6,195.8 1112.9,196.9 1114.2,195.1 1115.5,198.1 1116.8,192.3 1118.1,192.4 1119.4,197.0 1120.7,194.0 1122.0,190.5 1123.3,196.1 1124.6,198.2 1125.9,191.7 1127.2,187.5 1128.5,190.7 1129.8,190.5 1131.1,189.5 1132.4,194.6 1133.7,186.6 1135.0,192.9 1136.3,186.1 1137.6,187.9 1138.9,193.6 1140.2,196.6 1141.5,196.9 1142.8,195.5 1144.1,194.6 1145.4,194.6 1146.7,196.0 1148.0,193.6 1149.3,194.9 1150.6,196.0 1151.9,194.2 1153.2,196.5 1154.5,196.1 1155.8,200.8 1157.1,195.8 1158.4,192.8 1159.7,192.6 1161.0,193.8 1162.3,197.0 1163.6,193.2 1164.9,195.2 1166.2,200.2 1167.5,186.2 1168.8,189.5 1170.1,194.4 1171.4,195.3 1172.7,194.8 1174.0,192.5 1175.3,195.9 1176.6,194.9 1177.9,192.1 1179.2,201.6 1180.5,195.6 1181.8,192.0 1183.1,193.1 1184.4,192.7 1185.7,193.2 1187.0,184.4 1188.3,190.9 1189.6,196.4 1190.9,189.8 1192.2,192.7 1193.5,196.3 1194.8,196.3 1196.1,198.4 1197.4,188.0 1198.7,191.4 1200.0,191.7 1201.3,194.9 1202.6,196.8 1203.9,184.5 1205.2,195.7 1206.5,188.5 1207.8,194.8 1209.1,188.2 1210.4,193.1 1211.7,196.9 1213.0,192.8 1214.3,193.5 1215.6,195.6 1216.9,193.7 1218.2,192.7 1219.5,197.9 1220.8,196.9 1222.1,192.3 1223.4,201.9 1224.7,190.0 1226.0,195.6 1227.3,192.3 1228.6,193.2 1229.9,195.2 1231.2,193.8 1232.5,195.0 1233.8,188.0 1235.1,187.4 1236.4,194.3 1237.7,189.8 1239.0,189.1 1240.3,187.6 1241.6,196.4 1242.9,195.6 1244.2,197.9 1245.5,190.2 1246.8,192.5 1248.1,189.0 1249.4,194.9 1250.7,198.2 1252.0,190.3 1253.3,197.6 1254.6,196.5 1255.9,192.5 1257.2,186.2 1258.5,196.7 1259.8,192.8 1261.1,190.7 1262.4,193.8 1263.7,194.1 1265.0,197.8 1266.3,189.8 1267.6,196.1 1268.9,197.9 1270.2,198.0 1271.5,192.6 1272.8,190.2 1274.1,195.7 1275.4,193.3 1276.7,193.1 1278.0,197.4 1279.3,192.2 1280.6,185.0 1281.9,190.6 1283.2,186.3 1284.5,194.6 1285.8,193.8 1287.1,190.7 1288.4,192.3 1289.7,195.3 1291.0,193.1 1292.3,197.0 1293.6,192.8 1294.9,196.0 1296.2,197.8 1297.5,198.4 1298.8,190.9 1300.1,195.2 1301.4,186.6 1302.7,188.3 1304.0,185.6 1305.3,195.3 1306.6,188.7 1307.9,192.0 1309.2,191.8 1310.5,192.3 1311.8,190.5 1313.1,193.0 1314.4,198.4 1315.7,193.1 1317.0,194.2 1318.3,195.9 1319.6,192.1 1320.9,188.2 1322.2,190.1 1323.5,195.7 1324.8,187.3 1326.1,189.9 1327.4,195.4 1328.7,195.3 1330.0,192.6 1331.3,195.0 1332.6,193.1 1333.9,188.5 1335.2,186.7 1336.5,189.6 1337.8,195.1 1339.1,190.7 1340.4,189.1 1341.7,189.4 1343.0,186.9 1344.3,191.3 1345.6,188.2 1346.9,193.0 1348.2,184.5 1349.5,192.5 1350.8,190.1 1352.1,185.6 1353.4,193.9 1354.7,191.4 1356.0,184.7 1357.3,188.5 1358.6,192.7 1359.9,190.7 1361.2,194.6 1362.5,194.8 1363.8,194.6 1365.1,193.4 1366.4,196.6 1367.7,194.7 1369.0,193.8 1370.3,185.4 1371.6,194.4 1372.9,196.6 1374.2,191.5 1375.5,190.4 1376.8,198.3 1378.1,186.9 1379.4,193.1 1380.7,200.1 1382.0,189.8 1383.3,194.1 1384.6,198.4 1385.9,192.3 1387.2,194.0 1388.5,195.3 1389.8,189.5 1391.1,191.6 1392.4,193.1 1393.7,195.1 1395.0,192.5 1396.3,191.7 1397.6,189.0 1398.9,190.9 1400.2,195.2 1401.5,193.1 1402.8,189.8 1404.1,189.5 1405.4,201.1 1406.7,197.2 1408.0,195.2 1409.3,184.4 1410.6,194.0 1411.9,194.5 1413.2,198.5 1414.5,194.8 1415.8,192.9 1417.1,194.6 1418.4,186.7 1419.7,195.8 1421.0,194.3 1422.3,190.8 1423.6,197.1 1424.9,199.4 1426.2,189.0 1427.5,190.4 1428.8,193.7 1430.1,193.6 1431.4,191.7 1432.7,189.6 1434.0,199.6 1435.3,197.0 1436.6,189.4 1437.9,188.2 1439.2,198.1 1440.5,196.7 1441.8,199.3 1443.1,196.2 1444.4,190.4 1445.7,193.5 1447.0,185.9 1448.3,189.7 1449.6,192.4 1450.9,194.6 1452.2,190.7 1453.5,192.3 1454.8,194.4 1456.1,194.3 1457.4,195.1 1458.7,193.8 1460.0,191.9 1461.3,195.4 1462.6,193.3 1463.9,190.2 1465.2,190.5 1466.5,192.6 1467.8,192.5 1469.1,193.3 1470.4,192.9 1471.7,193.4 1473.0,192.5 1474.3,188.7 1475.6,193.8 1476.9,196.4 1478.2,194.6 1479.5,192.4 1480.8,194.3 1482.1,189.8 1483.4,186.3 1484.7,192.4 1486.0,189.7 1487.3,194.9 1488.6,189.4 1489.9,183.8 1491.2,188.5 1492.5,197.6 1493.8,192.0 1495.1,188.2 1496.4,189.8 1497.7,194.2 1499.0,194.6 1500.3,193.5 1501.6,197.7 1502.9,195.6 1504.2,193.0 1505.5,194.8 1506.8,198.4 1508.1,196.5 1509.4,196.5 1510.7,189.6 1512.0,191.9 1513.3,195.1 1514.6,192.0 1515.9,196.2 1517.2,195.0 1518.5,196.0 1519.8,192.3 1521.1,201.1 1522.4,197.6 1523.7,192.5 1525.0,193.0 1526.3,201.3 1527.6,192.4 1528.9,195.6 1530.2,196.2 1531.5,193.1 1532.8,188.9 1534.1,192.9 1535.4,193.9 1536.7,196.5 1538.0,195.6 1539.3,193.0 1540.6,195.5 1541.9,194.7 1543.2,193.5 1544.5,192.9 1545.8,191.9 1547.1,194.8 1548.4,189.4 1549.7,190.2 1551.0,192.4 1552.3,187.8 1553.6,190.7 1554.9,185.8 1556.2,189.7 1557.5,194.2 1558.8,194.6 1560.1,192.6 1561.4,191.8 1562.7,187.9 1564.0,198.2 1565.3,194.9 1566.6,196.4 1567.9,190.1 1569.2,191.7 1570.5,186.5 1571.8,194.5 1573.1,195.9 1574.4,186.6 1575.7,191.8 1577.0,194.6 1578.3,186.9 1579.6,186.0 1580.9,188.4 1582.2,190.1 1583.5,187.7 1584.8,192.2 1586.1,193.3 1587.4,194.7 1588.7,195.1 1590.0,197.7 1591.3,196.9 1592.6,188.6 1593.9,190.5 1595.2,188.8 1596.5,188.6 1597.8,191.8 1599.1,192.5 1600.4,194.1 1601.7,187.3 1603.0,187.7 1604.3,191.7 1605.6,191.5 1606.9,191.0 1608.2,191.7 1609.5,189.4 1610.8,193.9 1612.1,193.1 1613.4,191.5 1614.7,189.4 1616.0,190.7 1617.3,182.4 1618.6,187.2 1619.9,191.0 1621.2,186.2 1622.5,191.3 1623.8,191.6 1625.1,186.5 1626.4,189.8 1627.7,190.0 1629.0,192.6 1630.3,193.4 1631.6,191.4 1632.9,188.5 1634.2,190.6 1635.5,191.2 1636.8,193.9 1638.1,192.8 1639.4,189.4 1640.7,187.0 1642.0,190.0 1643.3,189.2 1644.6,187.9 1645.9,191.1 1647.2,190.3 1648.5,192.2 1649.8,193.8 1651.1,190.9 1652.4,199.7 1653.7,191.9 1655.0,195.9 1656.3,193.1 1657.6,196.2 1658.9,185.0 1660.2,189.3 1661.5,193.0 1662.8,194.6 1664.1,200.6 1665.4,194.6 1666.7,197.2 1668.0,195.8 1669.3,196.3 1670.6,194.9 1671.9,192.6 1673.2,194.6 1674.5,189.7 1675.8,196.7 1677.1,190.1 1678.4,193.7 1679.7,200.3 1681.0,193.3 1682.3,193.4 1683.6,197.2 1684.9,193.9 1686.2,190.9 1687.5,194.1 1688.8,195.6 1690.1,196.2 1691.4,191.4 1692.7,199.3 1694.0,199.8 1695.3,194.5 1696.6,194.8 1697.9,192.6 1699.2,198.5 1700.5,192.2 1701.8,196.3 1703.1,193.1 1704.4,192.3 1705.7,197.1 1707.0,199.8 1708.3,195.8 1709.6,193.4 1710.9,198.3 1712.2,196.1 1713.5,197.3 1714.8,201.6 1716.1,200.9 1717.4,195.6 1718.7,204.5 1720.0,198.1 1721.3,200.2 1722.6,195.9 1723.9,197.6 1725.2,192.4 1726.5,203.7 1727.8,203.7 1729.1,195.3 1730.4,193.8 1731.7,193.5 1733.0,203.0 1734.3,198.8 1735.6,200.0 1736.9,199.6 1738.2,200.5 1739.5,197.6 1740.8,201.3 1742.1,197.1 1743.4,201.5 1744.7,203.5 1746.0,204.5 1747.3,202.6 1748.6,200.4 1749.9,204.0 1751.2,202.5 1752.5,209.4 1753.8,207.7 1755.1,204.9 1756.4,202.8 1757.7,201.3 1759.0,199.8 1760.3,201.1 1761.6,202.8 1762.9,203.2 1764.2,202.9 1765.5,207.4 1766.8,199.0 1768.1,201.5 1769.4,211.9 1770.7,198.4 1772.0,202.4 1773.3,206.0 1774.6,207.2 1775.9,208.5 1777.2,206.5 1778.5,208.4 1779.8,207.6 1781.1,210.0 1782.4,201.5 1783.7,204.1 1785.0,207.3 1786.3,204.3 1787.6,204.0 1788.9,209.6 1790.2,206.1 1791.5,210.1 1792.8,211.1 1794.1,210.0 1795.4,210.7 1796.7,209.0 1798.0,204.7 1799.3,209.0 1800.6,211.2 1801.9,208.4 1803.2,208.3 1804.5,209.9 1805.8,203.5 1807.1,206.7 1808.4,209.9 1809.7,201.1 1811.0,201.4 1812.3,199.6 1813.6,205.2 1814.9,201.8 1816.2,203.5 1817.5,198.6 1818.8,200.4" fill="none" stroke="#f0f0f0" stroke-width="1.15" stroke-linejoin="round"/>
<path d="M979.9,39 L1822,39" stroke="#929292" stroke-width="2" fill="none"/><path d="M1821,38 L1821,262" stroke="#929292" stroke-width="2" fill="none"/><path d="M980.6,38 L980.6,262" stroke="#929292" stroke-width="1.4" fill="none"/><path d="M979.9,261.6 L1822,261.6" stroke="#a0a0a0" stroke-width="1.3" fill="none"/>
<line x1="1401.5" y1="39" x2="1401.5" y2="261.5" stroke="#e8e840" stroke-width="1.3"/>
<line x1="1618.7" y1="39" x2="1618.7" y2="263.0" stroke="#c81e1e" stroke-width="1.5"/>
<text x="965" y="46.5" text-anchor="end" font-size="20">40.0</text>
<text x="965" y="92.0" text-anchor="end" font-size="20">20.0</text>
<text x="965" y="136.0" text-anchor="end" font-size="20">0.0</text>
<text x="965" y="181.0" text-anchor="end" font-size="20">-20.0</text>
<text x="965" y="226.0" text-anchor="end" font-size="20">-40.0</text>
<text x="965" y="269.0" text-anchor="end" font-size="20">-60.0</text>
<text x="1056.5" y="286" text-anchor="middle" font-size="20">189.8</text>
<text x="1138.5" y="286" text-anchor="middle" font-size="20">190</text>
<text x="1220.5" y="286" text-anchor="middle" font-size="20">190.2</text>
<text x="1302.5" y="286" text-anchor="middle" font-size="20">190.4</text>
<text x="1385.5" y="286" text-anchor="middle" font-size="20">190.6</text>
<text x="1467.5" y="286" text-anchor="middle" font-size="20">190.8</text>
<text x="1549.5" y="286" text-anchor="middle" font-size="20">191</text>
<text x="1631.5" y="286" text-anchor="middle" font-size="20">191.2</text>
<text x="1713.5" y="286" text-anchor="middle" font-size="20">191.4</text>
<text x="1795.5" y="286" text-anchor="middle" font-size="20">191.6</text>
<text x="1402" y="318" text-anchor="middle" font-size="24">Frequency (MHz)</text>
<text transform="translate(886,151) rotate(-90)" text-anchor="middle" font-size="24">Magnitude (dB)</text>
</svg>
<svg class="a" style="left:0;top:0;pointer-events:none" width="1873" height="912" viewBox="0 0 1873 912">
<rect x="1372" y="463.5" width="116.75" height="354.5" fill="#404040"/>
<line x1="1393.50" y1="463.5" x2="1393.50" y2="818" stroke="#888888" stroke-width="1"/>
<line x1="1425.50" y1="463.5" x2="1425.50" y2="818" stroke="#888888" stroke-width="1"/>
<line x1="1457.50" y1="463.5" x2="1457.50" y2="818" stroke="#888888" stroke-width="1"/>
<line x1="1520.50" y1="463.5" x2="1520.50" y2="818" stroke="#888888" stroke-width="1"/>
<line x1="1552.50" y1="463.5" x2="1552.50" y2="818" stroke="#888888" stroke-width="1"/>
<line x1="1584.50" y1="463.5" x2="1584.50" y2="818" stroke="#888888" stroke-width="1"/>
<line x1="1615.50" y1="463.5" x2="1615.50" y2="818" stroke="#888888" stroke-width="1"/>
<line x1="1647.50" y1="463.5" x2="1647.50" y2="818" stroke="#888888" stroke-width="1"/>
<line x1="1679.50" y1="463.5" x2="1679.50" y2="818" stroke="#888888" stroke-width="1"/>
<line x1="1711.50" y1="463.5" x2="1711.50" y2="818" stroke="#888888" stroke-width="1"/>
<line x1="1742.50" y1="463.5" x2="1742.50" y2="818" stroke="#888888" stroke-width="1"/>
<line x1="1774.50" y1="463.5" x2="1774.50" y2="818" stroke="#888888" stroke-width="1"/>
<line x1="1806.50" y1="463.5" x2="1806.50" y2="818" stroke="#888888" stroke-width="1"/>
<line x1="1838.50" y1="463.5" x2="1838.50" y2="818" stroke="#888888" stroke-width="1"/>
<line x1="1372" y1="534.5" x2="1846" y2="534.5" stroke="#888888" stroke-width="1"/>
<line x1="1372" y1="605.5" x2="1846" y2="605.5" stroke="#888888" stroke-width="1"/>
<line x1="1372" y1="676.5" x2="1846" y2="676.5" stroke="#888888" stroke-width="1"/>
<line x1="1372" y1="747.5" x2="1846" y2="747.5" stroke="#888888" stroke-width="1"/>
<rect x="1372" y="463.5" width="474" height="354.5" fill="none" stroke="#929292" stroke-width="2"/>
<line x1="1372" y1="463.5" x2="1372" y2="818" stroke="#b83227" stroke-width="2.4"/>
<line x1="1488.75" y1="463.5" x2="1488.75" y2="818" stroke="#e8e860" stroke-width="1" stroke-dasharray="1.5,1"/>
<polyline points="1373.2,763.2 1373.7,757.7 1374.2,811.2 1374.7,760.7 1375.2,777.0 1375.7,785.3 1376.2,770.5 1376.7,817.5 1377.2,785.8 1377.7,795.7 1378.2,796.2 1378.7,812.3 1379.2,754.8 1379.7,806.4 1380.2,763.4 1380.7,793.2 1381.2,791.4 1381.7,779.2 1382.2,788.9 1382.7,776.4 1383.2,766.0 1383.7,785.5 1384.2,790.1 1384.7,769.7 1385.2,792.3 1385.7,772.2 1386.2,768.8 1386.7,817.5 1387.2,757.9 1387.7,743.9 1388.2,766.8 1388.7,797.4 1389.2,810.2 1389.7,817.5 1390.2,753.8 1390.7,784.9 1391.2,785.7 1391.7,772.2 1392.2,778.6 1392.7,787.2 1393.2,798.7 1393.7,779.2 1394.2,768.6 1394.7,765.9 1395.2,791.4 1395.7,794.9 1396.2,754.9 1396.7,814.0 1397.2,753.2 1397.7,798.8 1398.2,765.8 1398.7,765.2 1399.2,795.2 1399.7,789.7 1400.2,792.1 1400.7,815.0 1401.2,754.3 1401.7,763.5 1402.2,790.1 1402.7,801.6 1403.2,773.6 1403.7,777.0 1404.2,777.8 1404.7,790.1 1405.2,817.5 1405.7,774.0 1406.2,756.2 1406.7,778.3 1407.2,759.6 1407.7,756.6 1408.2,817.5 1408.7,764.2 1409.2,761.4 1409.7,784.9 1410.2,769.7 1410.7,796.0 1411.2,817.5 1411.7,787.6 1412.2,798.6 1412.7,817.5 1413.2,784.3 1413.7,801.3 1414.2,804.0 1414.7,789.8 1415.2,770.7 1415.7,793.5 1416.2,747.3 1416.7,794.7 1417.2,779.3 1417.7,766.3 1418.2,817.5 1418.7,767.4 1419.2,798.8 1419.7,806.5 1420.2,773.7 1420.7,758.2 1421.2,775.8 1421.7,766.0 1422.2,759.7 1422.7,779.3 1423.2,786.1 1423.7,770.4 1424.2,799.7 1424.7,815.2 1425.2,772.3 1425.7,786.5 1426.2,779.5 1426.7,788.3 1427.2,790.9 1427.7,787.0 1428.2,796.3 1428.7,775.8 1429.2,800.4 1429.7,817.5 1430.2,801.7 1430.7,807.9 1431.2,772.9 1431.7,805.5 1432.2,761.6 1432.7,745.7 1433.2,762.9 1433.7,757.7 1434.2,767.0 1434.7,790.3 1435.2,767.1 1435.7,774.4 1436.2,805.2 1436.7,817.5 1437.2,768.6 1437.7,769.3 1438.2,792.3 1438.7,774.9 1439.2,776.8 1439.7,754.4 1440.2,753.9 1440.7,780.7 1441.2,788.5 1441.7,789.7 1442.2,756.5 1442.7,800.1 1443.2,807.5 1443.7,772.9 1444.2,800.3 1444.7,817.5 1445.2,817.5 1445.7,790.6 1446.2,794.4 1446.7,776.0 1447.2,776.4 1447.7,785.6 1448.2,792.5 1448.7,789.7 1449.2,766.4 1449.7,776.6 1450.2,816.8 1450.7,785.9 1451.2,776.0 1451.7,781.6 1452.2,787.0 1452.7,782.3 1453.2,780.3 1453.7,770.3 1454.2,787.4 1454.7,817.5 1455.2,778.2 1455.7,774.0 1456.2,778.7 1456.7,789.4 1457.2,758.1 1457.7,817.5 1458.2,758.6 1458.7,778.9 1459.2,772.0 1459.7,756.0 1460.2,771.9 1460.7,770.6 1461.2,800.4 1461.7,773.5 1462.2,817.5 1462.7,775.8 1463.2,805.0 1463.7,773.0 1464.2,801.3 1464.7,758.6 1465.2,765.2 1465.7,775.7 1466.2,790.0 1466.7,766.1 1467.2,800.6 1467.7,794.7 1468.2,813.3 1468.7,792.3 1469.2,767.9 1469.7,772.7 1470.2,807.9 1470.7,776.7 1471.2,778.0 1471.7,790.6 1472.2,796.2 1472.7,765.6 1473.2,784.0 1473.7,779.2 1474.2,773.1 1474.7,788.5 1475.2,806.0 1475.7,767.0 1476.2,791.5 1476.7,780.1 1477.2,784.3 1477.7,774.9 1478.2,779.1 1478.7,780.4 1479.2,779.4 1479.7,784.7 1480.2,782.1 1480.7,778.8 1481.2,778.9 1481.7,817.2 1482.2,775.7 1482.7,816.9 1483.2,803.5 1483.7,761.0 1484.2,773.3 1484.7,755.7 1485.2,788.9 1485.7,802.4 1486.2,810.8 1486.7,773.8 1487.2,794.2 1487.7,780.2" fill="none" stroke="#fafafa" stroke-width="1.25" stroke-linejoin="bevel"/>
<polyline points="1489.25,631 1489.45,700 1490.25,738 1491.25,752 1492.25,760 1490.2,763.3 1490.7,772.7 1491.2,749.8 1491.7,781.9 1492.2,765.7 1492.7,755.2 1493.2,768.8 1493.7,754.2 1494.2,755.4 1494.7,786.8 1495.2,772.8 1495.7,766.2 1496.2,765.3 1496.7,771.8 1497.2,759.2 1497.7,811.4 1498.2,805.3 1498.7,788.2 1499.2,763.2 1499.7,779.8 1500.2,813.8 1500.7,766.0 1501.2,793.5 1501.7,762.2 1502.2,767.6 1502.7,803.2 1503.2,768.1 1503.7,809.7 1504.2,817.5 1504.7,792.3 1505.2,798.0 1505.7,783.2 1506.2,764.7 1506.7,758.5 1507.2,778.7 1507.7,777.4 1508.2,800.2 1508.7,791.8 1509.2,778.7 1509.7,769.4 1510.2,772.7 1510.7,758.7 1511.2,788.2 1511.7,768.6 1512.2,801.9 1512.7,815.5 1513.2,800.2 1513.7,773.7 1514.2,784.0 1514.7,771.1 1515.2,767.3 1515.7,789.0 1516.2,788.8 1516.7,751.5 1517.2,771.9 1517.7,786.5 1518.2,779.6 1518.7,779.5 1519.2,802.5 1519.7,779.0 1520.2,778.3 1520.7,764.1 1521.2,777.7 1521.7,797.0 1522.2,782.7 1522.7,767.4 1523.2,817.5 1523.7,771.6 1524.2,762.1 1524.7,779.2 1525.2,775.6 1525.7,791.3 1526.2,794.7 1526.7,769.3 1527.2,775.5 1527.7,781.6 1528.2,804.0 1528.7,766.9 1529.2,814.0 1529.7,781.9 1530.2,776.9 1530.7,767.9 1531.2,761.5 1531.7,802.0 1532.2,817.5 1532.7,764.4 1533.2,786.7 1533.7,798.1 1534.2,797.8 1534.7,764.4 1535.2,785.1 1535.7,765.2 1536.2,763.0 1536.7,809.6 1537.2,788.2 1537.7,773.6 1538.2,806.6 1538.7,782.9 1539.2,787.5 1539.7,782.8 1540.2,762.7 1540.7,781.1 1541.2,762.7 1541.7,777.1 1542.2,754.2 1542.7,776.8 1543.2,783.1 1543.7,767.3 1544.2,816.7 1544.7,763.8 1545.2,773.2 1545.7,776.2 1546.2,764.2 1546.7,778.4 1547.2,782.1 1547.7,766.7 1548.2,781.4 1548.7,791.9 1549.2,786.5 1549.7,774.3 1550.2,760.5 1550.7,786.6 1551.2,817.5 1551.7,783.8 1552.2,801.4 1552.7,754.8 1553.2,781.7 1553.7,799.4 1554.2,817.5 1554.7,750.5 1555.2,781.8 1555.7,762.6 1556.2,760.4 1556.7,817.5 1557.2,813.3 1557.7,758.8 1558.2,774.3 1558.7,770.5 1559.2,788.3 1559.7,763.9 1560.2,768.1 1560.7,761.8 1561.2,777.4 1561.7,767.6 1562.2,770.6 1562.7,765.9 1563.2,760.3 1563.7,781.6 1564.2,817.5 1564.7,812.7 1565.2,798.2 1565.7,799.6 1566.2,778.9 1566.7,752.2 1567.2,817.1 1567.7,759.5 1568.2,780.7 1568.7,793.9 1569.2,798.2 1569.7,777.9 1570.2,811.6 1570.7,783.0 1571.2,805.2 1571.7,755.1 1572.2,774.0 1572.7,805.7 1573.2,812.6 1573.7,731.5 1574.2,781.2 1574.7,795.5 1575.2,759.3 1575.7,817.5 1576.2,780.8 1576.7,775.6 1577.2,806.4 1577.7,778.7 1578.2,808.6 1578.7,805.4 1579.2,770.4 1579.7,807.1 1580.2,776.8 1580.7,788.6 1581.2,765.4 1581.7,777.3 1582.2,782.8 1582.7,784.7 1583.2,802.2 1583.7,789.8 1584.2,777.2 1584.7,772.1 1585.2,791.6 1585.7,757.6 1586.2,786.9 1586.7,771.6 1587.2,817.5 1587.7,793.3 1588.2,800.8 1588.7,783.5 1589.2,774.6 1589.7,800.7 1590.2,795.5 1590.7,817.5 1591.2,777.7 1591.7,784.9 1592.2,762.2 1592.7,776.8 1593.2,763.3 1593.7,809.1 1594.2,755.8 1594.7,756.6 1595.2,769.5 1595.7,772.8 1596.2,787.4 1596.7,802.8 1597.2,771.8 1597.7,760.7 1598.2,756.8 1598.7,802.2 1599.2,787.1 1599.7,770.4 1600.2,766.8 1600.7,794.7 1601.2,768.0 1601.7,796.2 1602.2,810.2 1602.7,811.6 1603.2,817.5 1603.7,772.7 1604.2,788.7 1604.7,781.8 1605.2,791.3 1605.7,805.1 1606.2,802.1 1606.7,781.4 1607.2,793.4 1607.7,755.6 1608.2,786.3 1608.7,808.0 1609.2,790.2 1609.7,763.5 1610.2,811.5 1610.7,769.3 1611.2,770.8 1611.7,773.9 1612.2,760.9 1612.7,787.8 1613.2,777.8 1613.7,764.3 1614.2,765.3 1614.7,795.7 1615.2,788.6 1615.7,795.8 1616.2,768.1 1616.7,807.5 1617.2,792.4 1617.7,777.9 1618.2,752.5 1618.7,776.1 1619.2,815.4 1619.7,764.2 1620.2,748.2 1620.7,785.2 1621.2,794.2 1621.7,763.4 1622.2,809.4 1622.7,770.8 1623.2,765.0 1623.7,752.1 1624.2,782.0 1624.7,756.8 1625.2,777.2 1625.7,749.7 1626.2,779.0 1626.7,794.4 1627.2,801.4 1627.7,754.5 1628.2,797.7 1628.7,777.1 1629.2,787.4 1629.7,787.5 1630.2,793.7 1630.7,749.2 1631.2,799.1 1631.7,795.4 1632.2,810.9 1632.7,766.8 1633.2,798.4 1633.7,789.3 1634.2,817.5 1634.7,772.0 1635.2,807.8 1635.7,755.2 1636.2,793.2 1636.7,764.5 1637.2,766.5 1637.7,765.5 1638.2,769.5 1638.7,790.4 1639.2,776.9 1639.7,789.9 1640.2,767.6 1640.7,804.1 1641.2,794.4 1641.7,791.4 1642.2,814.3 1642.7,817.5 1643.2,795.9 1643.7,796.7 1644.2,783.4 1644.7,772.3 1645.2,787.7 1645.7,754.5 1646.2,798.1 1646.7,796.1 1647.2,772.0 1647.7,800.3 1648.2,779.0 1648.7,782.7 1649.2,785.0 1649.7,813.3 1650.2,783.8 1650.7,790.1 1651.2,799.5 1651.7,817.5 1652.2,795.0 1652.7,766.2 1653.2,767.2 1653.7,799.6 1654.2,789.7 1654.7,782.9 1655.2,775.1 1655.7,780.6 1656.2,782.3 1656.7,817.5 1657.2,815.8 1657.7,797.7 1658.2,769.7 1658.7,790.3 1659.2,787.2 1659.7,792.4 1660.2,779.0 1660.7,791.1 1661.2,768.6 1661.7,794.2 1662.2,773.5 1662.7,772.7 1663.2,761.2 1663.7,774.5 1664.2,793.6 1664.7,773.4 1665.2,781.4 1665.7,780.9 1666.2,760.6 1666.7,817.5 1667.2,808.2 1667.7,783.8 1668.2,804.5 1668.7,771.0 1669.2,781.6 1669.7,778.8 1670.2,784.8 1670.7,782.1 1671.2,774.6 1671.7,811.3 1672.2,817.5 1672.7,791.7 1673.2,799.9 1673.7,817.5 1674.2,755.1 1674.7,756.6 1675.2,802.5 1675.7,811.8 1676.2,765.2 1676.7,768.5 1677.2,817.5 1677.7,771.8 1678.2,777.1 1678.7,766.7 1679.2,773.0 1679.7,785.8 1680.2,795.2 1680.7,789.1 1681.2,772.9 1681.7,754.3 1682.2,798.5 1682.7,803.6 1683.2,791.6 1683.7,772.1 1684.2,789.4 1684.7,771.0 1685.2,784.5 1685.7,785.5 1686.2,789.2 1686.7,767.1 1687.2,794.4 1687.7,817.5 1688.2,765.1 1688.7,747.5 1689.2,757.2 1689.7,788.6 1690.2,767.3 1690.7,789.7 1691.2,782.3 1691.7,791.5 1692.2,796.8 1692.7,788.1 1693.2,800.3 1693.7,776.0 1694.2,785.0 1694.7,807.7 1695.2,794.9 1695.7,795.7 1696.2,799.5 1696.7,781.9 1697.2,773.6 1697.7,756.3 1698.2,785.2 1698.7,767.4 1699.2,776.7 1699.7,817.5 1700.2,807.4 1700.7,788.4 1701.2,760.9 1701.7,760.1 1702.2,791.0 1702.7,766.7 1703.2,791.6 1703.7,767.1 1704.2,793.3 1704.7,766.6 1705.2,796.8 1705.7,775.2 1706.2,817.5 1706.7,782.1 1707.2,790.8 1707.7,777.9 1708.2,757.7 1708.7,817.5 1709.2,766.4 1709.7,791.4 1710.2,786.5 1710.7,783.2 1711.2,777.2 1711.7,779.2 1712.2,808.4 1712.7,791.5 1713.2,814.0 1713.7,804.0 1714.2,762.5 1714.7,797.7 1715.2,803.4 1715.7,763.9 1716.2,758.2 1716.7,762.2 1717.2,784.1 1717.7,769.3 1718.2,767.0 1718.7,773.3 1719.2,787.0 1719.7,812.1 1720.2,759.3 1720.7,811.8 1721.2,817.5 1721.7,775.6 1722.2,801.8 1722.7,817.5 1723.2,763.1 1723.7,770.5 1724.2,807.6 1724.7,755.1 1725.2,781.8 1725.7,775.3 1726.2,817.5 1726.7,794.2 1727.2,796.3 1727.7,775.5 1728.2,759.1 1728.7,770.5 1729.2,817.5 1729.7,770.1 1730.2,776.1 1730.7,778.5 1731.2,797.3 1731.7,798.1 1732.2,790.5 1732.7,814.0 1733.2,748.5 1733.7,786.3 1734.2,817.5 1734.7,795.4 1735.2,778.0 1735.7,780.5 1736.2,781.6 1736.7,778.2 1737.2,774.7 1737.7,764.1 1738.2,771.5 1738.7,795.2 1739.2,754.2 1739.7,794.4 1740.2,817.5 1740.7,795.4 1741.2,773.9 1741.7,768.6 1742.2,795.3 1742.7,762.2 1743.2,777.6 1743.7,774.7 1744.2,799.3 1744.7,772.9 1745.2,801.1 1745.7,754.7 1746.2,817.0 1746.7,810.1 1747.2,780.1 1747.7,755.4 1748.2,767.7 1748.7,773.9 1749.2,801.5 1749.7,772.9 1750.2,785.2 1750.7,765.3 1751.2,769.5 1751.7,749.9 1752.2,817.5 1752.7,756.2 1753.2,797.5 1753.7,800.9 1754.2,767.8 1754.7,756.3 1755.2,778.0 1755.7,811.8 1756.2,817.5 1756.7,751.1 1757.2,813.7 1757.7,791.9 1758.2,787.7 1758.7,805.2 1759.2,776.2 1759.7,752.4 1760.2,817.5 1760.7,817.5 1761.2,794.0 1761.7,787.1 1762.2,780.7 1762.7,750.3 1763.2,800.7 1763.7,764.9 1764.2,751.5 1764.7,772.8 1765.2,795.3 1765.7,817.5 1766.2,757.8 1766.7,796.9 1767.2,787.4 1767.7,762.7 1768.2,773.0 1768.7,754.1 1769.2,777.2 1769.7,787.6 1770.2,783.5 1770.7,790.8 1771.2,774.7 1771.7,781.7 1772.2,777.8 1772.7,787.0 1773.2,788.4 1773.7,774.5 1774.2,756.5 1774.7,786.1 1775.2,790.5 1775.7,817.3 1776.2,778.4 1776.7,754.7 1777.2,784.5 1777.7,776.2 1778.2,785.8 1778.7,807.6 1779.2,817.5 1779.7,808.9 1780.2,790.9 1780.7,788.0 1781.2,776.1 1781.7,777.2 1782.2,809.1 1782.7,789.7 1783.2,775.7 1783.7,794.0 1784.2,754.9 1784.7,780.1 1785.2,792.4 1785.7,792.0 1786.2,771.1 1786.7,788.5 1787.2,778.0 1787.7,773.6 1788.2,772.7 1788.7,792.1 1789.2,774.1 1789.7,793.0 1790.2,792.3 1790.7,785.9 1791.2,784.4 1791.7,792.3 1792.2,749.0 1792.7,769.9 1793.2,807.8 1793.7,761.6 1794.2,782.1 1794.7,789.4 1795.2,784.5 1795.7,770.3 1796.2,810.4 1796.7,794.4 1797.2,778.6 1797.7,772.8 1798.2,806.5 1798.7,794.7 1799.2,786.8 1799.7,771.1 1800.2,769.7 1800.7,780.9 1801.2,777.5 1801.7,806.8 1802.2,762.3 1802.7,778.7 1803.2,784.8 1803.7,779.2 1804.2,794.8 1804.7,764.7 1805.2,770.6 1805.7,801.2 1806.2,787.6 1806.7,799.0 1807.2,774.0 1807.7,784.9 1808.2,756.6 1808.7,798.7 1809.2,807.9 1809.7,783.8 1810.2,777.8 1810.7,746.8 1811.2,770.0 1811.7,783.6 1812.2,774.0 1812.7,771.7 1813.2,817.5 1813.7,766.5 1814.2,773.0 1814.7,753.1 1815.2,798.9 1815.7,787.1 1816.2,789.0 1816.7,812.2 1817.2,775.5 1817.7,802.1 1818.2,804.2 1818.7,794.3 1819.2,800.4 1819.7,761.7 1820.2,779.3 1820.7,785.7 1821.2,797.8 1821.7,797.9 1822.2,801.9 1822.7,815.8 1823.2,777.8 1823.7,761.7 1824.2,777.2 1824.7,780.0 1825.2,817.5 1825.7,797.9 1826.2,776.4 1826.7,781.2 1827.2,797.7 1827.7,762.1 1828.2,770.5 1828.7,781.3 1829.2,760.1 1829.7,807.7 1830.2,780.8 1830.7,817.5 1831.2,816.2 1831.7,737.4 1832.2,779.6 1832.7,763.6 1833.2,777.3 1833.7,779.0 1834.2,769.3 1834.7,782.1 1835.2,752.4 1835.7,763.7 1836.2,776.0 1836.7,769.7 1837.2,752.3 1837.7,761.5 1838.2,785.2 1838.7,808.9 1839.2,767.5 1839.7,775.4 1840.2,759.0 1840.7,785.4 1841.2,775.3 1841.7,767.0 1842.2,817.5 1842.7,785.8 1843.2,791.3 1843.7,783.2 1844.2,801.5 1844.7,788.9" fill="none" stroke="#fafafa" stroke-width="1.25" stroke-linejoin="bevel"/>
<line x1="1489.15" y1="620" x2="1489.15" y2="748" stroke="#fafaa0" stroke-width="2.1"/>
<circle cx="1489.1" cy="632" r="5.9" fill="#fafa14"/>
<text x="1361" y="471.0" text-anchor="end" font-size="20">-10.0</text>
<text x="1361" y="542.0" text-anchor="end" font-size="20">-20.0</text>
<text x="1361" y="613.0" text-anchor="end" font-size="20">-30.0</text>
<text x="1361" y="684.0" text-anchor="end" font-size="20">-40.0</text>
<text x="1361" y="755.0" text-anchor="end" font-size="20">-50.0</text>
<text x="1361" y="826.0" text-anchor="end" font-size="20">-60.0</text>
<text x="1393.5" y="839" text-anchor="middle" font-size="14.5">-60</text>
<text x="1425.2" y="859" text-anchor="middle" font-size="14.5">-40</text>
<text x="1457.0" y="839" text-anchor="middle" font-size="14.5">-20</text>
<text x="1488.8" y="859" text-anchor="middle" font-size="14.5">0</text>
<text x="1520.5" y="839" text-anchor="middle" font-size="14.5">20</text>
<text x="1552.2" y="859" text-anchor="middle" font-size="14.5">40</text>
<text x="1584.0" y="839" text-anchor="middle" font-size="14.5">60</text>
<text x="1615.8" y="859" text-anchor="middle" font-size="14.5">80</text>
<text x="1647.5" y="839" text-anchor="middle" font-size="14.5">100</text>
<text x="1679.2" y="859" text-anchor="middle" font-size="14.5">120</text>
<text x="1711.0" y="839" text-anchor="middle" font-size="14.5">140</text>
<text x="1742.8" y="859" text-anchor="middle" font-size="14.5">160</text>
<text x="1774.5" y="839" text-anchor="middle" font-size="14.5">180</text>
<text x="1806.2" y="859" text-anchor="middle" font-size="14.5">200</text>
<text x="1838.0" y="839" text-anchor="middle" font-size="14.5">220</text>
<text x="1609.5" y="887" text-anchor="middle" font-size="20">Distance Difference (km)</text>
<text transform="translate(1292,641) rotate(-90)" text-anchor="middle" font-size="20">Magnitude (dB)</text>
</svg>
</body></html>
